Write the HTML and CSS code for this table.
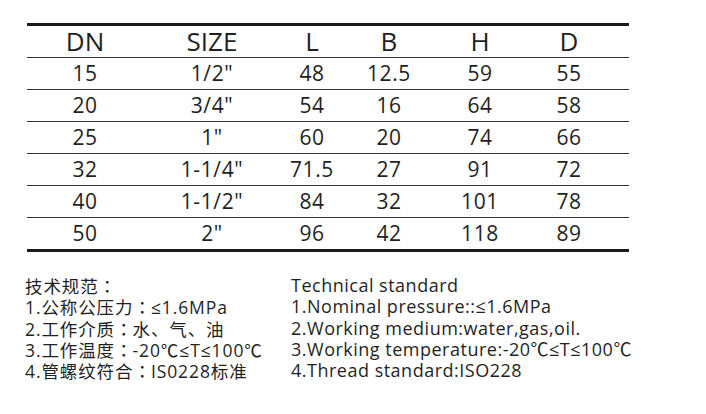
FILE: index.html
```html
<!DOCTYPE html>
<html>
<head>
    <meta name="viewport" content="width=device-width, initial-scale=1.0">
    <title>Technical standard</title>
    <link rel="stylesheet" href="styles.css">
</head>
<body>
    <div class="sheet">
        <table class="size-table">
            <colgroup>
                <col class="col-dn">
                <col class="col-size">
                <col class="col-l">
                <col class="col-b">
                <col class="col-h">
                <col class="col-d">
            </colgroup>
            <thead>
                <tr>
                    <th>DN</th>
                    <th>SIZE</th>
                    <th>L</th>
                    <th>B</th>
                    <th>H</th>
                    <th>D</th>
                </tr>
            </thead>
            <tbody>
                <tr><td>15</td><td>1/2"</td><td>48</td><td>12.5</td><td>59</td><td>55</td></tr>
                <tr><td>20</td><td>3/4"</td><td>54</td><td>16</td><td>64</td><td>58</td></tr>
                <tr><td>25</td><td>1"</td><td>60</td><td>20</td><td>74</td><td>66</td></tr>
                <tr><td>32</td><td>1-1/4"</td><td>71.5</td><td>27</td><td>91</td><td>72</td></tr>
                <tr><td>40</td><td>1-1/2"</td><td>84</td><td>32</td><td>101</td><td>78</td></tr>
                <tr><td>50</td><td>2"</td><td>96</td><td>42</td><td>118</td><td>89</td></tr>
            </tbody>
        </table>

        <div class="specs">
            <div class="spec-col spec-cn">
                <p>技术规范<span class="colon">：</span></p>
                <p>1.公称公压力<span class="colon">：</span>≤1.6MPa</p>
                <p>2.工作介质<span class="colon">：</span>水、气、油</p>
                <p>3.工作温度<span class="colon">：</span>-20℃≤T≤100℃</p>
                <p>4.管螺纹符合<span class="colon">：</span>IS0228标准</p>
            </div>
            <div class="spec-col spec-en">
                <p>Technical standard</p>
                <p>1.Nominal pressure::≤1.6MPa</p>
                <p>2.Working medium:water,gas,oil.</p>
                <p>3.Working temperature:-20℃≤T≤100℃</p>
                <p>4.Thread standard:ISO228</p>
            </div>
        </div>
    </div>
</body>
</html>
```

FILE: styles.css
```css
:root {
    --text-color: #1f1f1f;
    --rule-dark: #1c1c1c;
    --rule-thin: #333333;
}

body {
    margin: 0;
    background: #ffffff;
    color: var(--text-color);
    font-family: "Open Sans", "Noto Sans CJK SC", sans-serif;
}

.sheet {
    width: 706px;
    padding: 23px 0 0 25px;
    box-sizing: border-box;
}

.size-table {
    margin-left: 2px;
    width: 602px;
    border-collapse: collapse;
    table-layout: fixed;
    text-align: center;
}

.col-dn { width: 116px; }
.col-size { width: 138px; }
.col-l { width: 62px; }
.col-b { width: 92px; }
.col-h { width: 90px; }
.col-d { width: 104px; }

.size-table thead tr {
    border-top: 3px solid var(--rule-dark);
    border-bottom: 1px solid var(--rule-thin);
}

.size-table th {
    height: 31px;
    padding: 0;
    font-size: 26px;
    font-weight: 400;
    line-height: 31px;
}

.size-table tbody tr {
    border-bottom: 1px solid var(--rule-thin);
}

.size-table tbody tr:last-child {
    border-bottom: 3px solid var(--rule-dark);
}

.size-table td {
    height: 31px;
    padding: 0;
    font-size: 21px;
    line-height: 31px;
    letter-spacing: 0.6px;
}

.size-table th:last-child,
.size-table td:last-child {
    padding-right: 16px;
}

.specs {
    display: grid;
    grid-template-columns: 266px 1fr;
    margin-top: 23px;
}

.spec-col p {
    margin: 0;
    height: 21.3px;
    font-size: 18px;
    line-height: 21.3px;
    letter-spacing: 0.5px;
    white-space: nowrap;
}

.spec-cn p {
    font-size: 17.5px;
    letter-spacing: 0.9px;
}

/* full-width colon sits centred in the reference */
.spec-cn .colon {
    font-family: "Noto Sans CJK TC", sans-serif;
    letter-spacing: 0;
}
```
